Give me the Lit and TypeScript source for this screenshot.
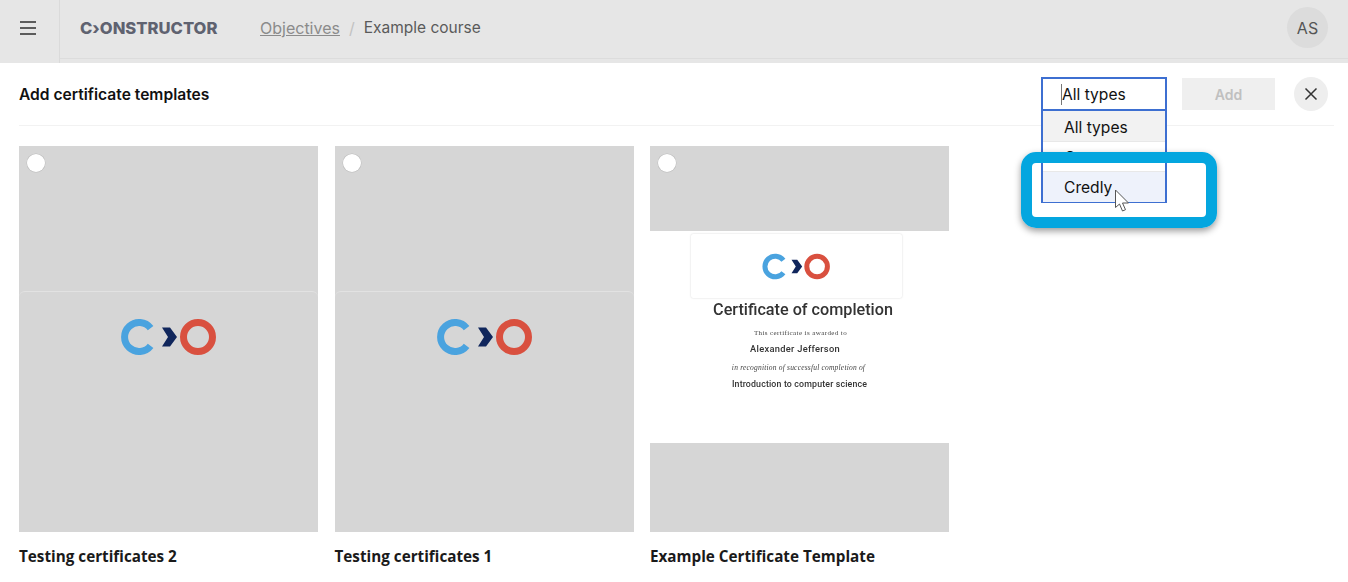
import { LitElement, html, css } from "lit";
import { customElement } from "lit/decorators.js";

const logo = html`<svg class="co-logo" viewBox="0 0 96 38" width="96" height="38">
  <path d="M29.6 10.2A14.5 14.5 0 1 0 29.6 27.8" fill="none" stroke="#4aa3df" stroke-width="7" />
  <path d="M41 9.5H49L56 19L49 28.5H41L47 19Z" fill="#10265c" />
  <circle cx="77" cy="19" r="14.5" fill="none" stroke="#d9503f" stroke-width="7" />
</svg>`;

@customElement("app-root")
export class AppRoot extends LitElement {
  static styles = css`
    :host {
      display: block;
      height: 582px;
      overflow: hidden;
      background: #fff;
      font-family: Inter, "Liberation Sans", sans-serif;
      color: #111;
    }

    .topbar {
      display: flex;
      align-items: flex-start;
      height: 63px;
      background: #e6e6e6;
    }

    .menu-btn {
      display: flex;
      align-items: center;
      justify-content: center;
      box-sizing: border-box;
      width: 60px;
      height: 63px;
      padding: 0 4px 7px 0;
      border-right: 1px solid #dadada;
    }

    .topbar-inner {
      flex: 1;
      display: flex;
      align-items: center;
      box-sizing: border-box;
      height: 59px;
      padding: 0 20px 3px 0;
      border-bottom: 1px solid #dcdcdc;
    }

    .brand {
      margin-left: 20px;
      width: 180px;
      font-size: 16.6px;
      font-weight: 800;
      color: #5f6270;
    }

    .crumbs {
      display: flex;
      align-items: center;
      font-size: 16px;
      color: #5a5a5a;
    }

    .crumbs a {
      color: #8b8b8b;
      text-decoration: underline;
    }

    .crumbs .sep {
      color: #c2c2c2;
      margin: 0 9px;
    }

    .crumbs .current {
      font-size: 15.5px;
    }

    .avatar {
      margin-left: auto;
      width: 41px;
      height: 41px;
      border-radius: 50%;
      background: #dcdcdc;
      color: #555;
      font-size: 16px;
      display: flex;
      align-items: center;
      justify-content: center;
    }

    .toolbar {
      display: flex;
      align-items: center;
      height: 62px;
      margin-left: 19px;
      margin-right: 14px;
      padding-right: 6px;
      border-bottom: 1px solid #f2f2f2;
    }

    .toolbar h1 {
      margin: 0;
      font-size: 15.6px;
      font-weight: 600;
      margin-right: auto;
    }

    .select {
      position: relative;
      width: 126px;
      height: 34px;
      margin-right: 15px;
    }

    .select-value {
      box-sizing: border-box;
      height: 34px;
      border: 2px solid #3d6fd1;
      padding-left: 19px;
      font-size: 15.6px;
      line-height: 32px;
      background: #fff;
      position: relative;
    }

    .caret {
      position: absolute;
      left: 18px;
      top: 5px;
      width: 1px;
      height: 21px;
      background: #777;
    }

    .options {
      position: absolute;
      left: 0;
      right: 0;
      top: 33px;
      box-sizing: border-box;
      height: 93px;
      border: 2px solid #3d6fd1;
      border-top-width: 1px;
      background: #fff;
      font-size: 15.6px;
    }

    .option {
      box-sizing: border-box;
      height: 30px;
      padding-left: 21px;
      line-height: 32px;
      border-bottom: 1px solid #e8e8e8;
    }

    .option.first {
      height: 31px;
      line-height: 33px;
      background: #f2f2f2;
    }

    .option.hover {
      height: 30px;
      border-bottom: 0;
      background: #eef2fb;
    }

    .highlight {
      position: absolute;
      left: -20px;
      top: 75px;
      width: 196px;
      height: 76px;
      box-sizing: border-box;
      border: 11px solid #04a6df;
      border-radius: 15px;
      box-shadow: 0 3px 7px rgba(0, 0, 0, 0.4);
    }

    .pointer {
      position: absolute;
      left: 73px;
      top: 112px;
    }

    .add-btn {
      width: 93px;
      height: 32px;
      margin-right: 19px;
      background: #efefef;
      color: #c0c0c0;
      font-size: 14px;
      font-weight: 600;
      display: flex;
      align-items: center;
      justify-content: center;
    }

    .close-btn {
      width: 34px;
      height: 34px;
      border-radius: 50%;
      background: #eeeeee;
      display: flex;
      align-items: center;
      justify-content: center;
    }

    .cards {
      display: grid;
      grid-template-columns: repeat(3, 299px);
      column-gap: 16.5px;
      padding: 20px 0 0 19px;
    }

    .thumb {
      position: relative;
      box-sizing: border-box;
      height: 386px;
      background: #d6d6d6;
    }

    .radio {
      position: absolute;
      left: 8px;
      top: 8px;
      width: 18px;
      height: 18px;
      border-radius: 50%;
      background: #fff;
      box-shadow: 0 0 0 0.5px #bbb;
    }

    .logo-panel {
      position: absolute;
      left: 0;
      right: 0;
      top: 145px;
      height: 90px;
      padding-left: 1px;
      box-sizing: border-box;
      border-top: 1px solid #e2e2e2;
      border-radius: 6px 6px 0 0;
      display: flex;
      align-items: center;
      justify-content: center;
    }

    .cert {
      position: absolute;
      left: 0;
      right: 0;
      top: 85px;
      height: 212px;
      background: #fff;
      display: flex;
      flex-direction: column;
      align-items: center;
      color: #333;
      filter: blur(0.5px);
      white-space: nowrap;
    }

    .cert-logo {
      box-sizing: border-box;
      width: 211px;
      height: 64px;
      margin-top: 3px;
      margin-right: 7px;
      border-radius: 2px;
      box-shadow: 0 0 2px rgba(0, 0, 0, 0.18);
      display: flex;
      align-items: center;
      justify-content: center;
    }

    .cert-logo .co-logo {
      width: 69px;
      height: 27px;
    }

    .cert-title {
      font-family: Roboto, sans-serif;
      font-size: 16.2px;
      font-weight: 500;
      line-height: 20px;
      margin-top: 2px;
      margin-left: 7px;
    }

    .cert-small {
      font-family: "Liberation Serif", serif;
      font-size: 7px;
      letter-spacing: 0.4px;
      line-height: 8px;
      margin-top: 9px;
      margin-left: 2px;
      color: #444;
    }

    .cert-name {
      font-family: Roboto, sans-serif;
      font-size: 9.3px;
      font-weight: 500;
      line-height: 12px;
      margin-top: 6px;
      margin-right: 9px;
      letter-spacing: 0.3px;
    }

    .cert-small.italic {
      font-style: italic;
      font-size: 7.5px;
      letter-spacing: 0.2px;
      margin-top: 9px;
      margin-left: 0;
      margin-right: 2px;
    }

    .cert-course {
      font-family: Roboto, sans-serif;
      font-size: 8.8px;
      font-weight: 500;
      line-height: 12px;
      margin-top: 6px;
      letter-spacing: 0.15px;
    }

    .card-title {
      margin-top: 14px;
      font-family: "Open Sans", sans-serif;
      font-size: 15.25px;
      font-weight: 700;
      line-height: 20px;
      color: #1a1a1a;
    }
  `;

  render() {
    return html`
      <header class="topbar">
        <div class="menu-btn">
          <svg width="18" height="16" viewBox="0 0 18 16">
            <path d="M1 2H17M1 8H17M1 14H17" stroke="#5c5c5c" stroke-width="2" fill="none" />
          </svg>
        </div>
        <div class="topbar-inner">
          <div class="brand">C›ONSTRUCTOR</div>
          <nav class="crumbs">
            <a>Objectives</a><span class="sep">/</span><span class="current">Example course</span>
          </nav>
          <div class="avatar">AS</div>
        </div>
      </header>

      <div class="toolbar">
        <h1>Add certificate templates</h1>
        <div class="select">
          <div class="select-value"><span class="caret"></span>All types</div>
          <div class="options">
            <div class="option first">All types</div>
            <div class="option">Custom</div>
            <div class="option hover">Credly</div>
          </div>
          <div class="highlight"></div>
          <svg class="pointer" width="17" height="24" viewBox="0 0 17 24">
            <path
              d="M1.5 1V18.5L5.5 15L8.5 22L11.5 20.7L8.5 14H14.5Z"
              fill="#fff"
              stroke="#555"
              stroke-width="1"
            />
          </svg>
        </div>
        <div class="add-btn">Add</div>
        <div class="close-btn">
          <svg width="14" height="14" viewBox="0 0 14 14">
            <path d="M1.5 1.5L12.5 12.5M12.5 1.5L1.5 12.5" stroke="#333" stroke-width="1.5" fill="none" />
          </svg>
        </div>
      </div>

      <section class="cards">
        <div class="card">
          <div class="thumb">
            <div class="logo-panel">${logo}</div>
            <span class="radio"></span>
          </div>
          <div class="card-title">Testing certificates 2</div>
        </div>
        <div class="card">
          <div class="thumb">
            <div class="logo-panel">${logo}</div>
            <span class="radio"></span>
          </div>
          <div class="card-title">Testing certificates 1</div>
        </div>
        <div class="card">
          <div class="thumb">
            <div class="cert">
              <div class="cert-logo">${logo}</div>
              <div class="cert-title">Certificate of completion</div>
              <div class="cert-small">This certificate is awarded to</div>
              <div class="cert-name">Alexander Jefferson</div>
              <div class="cert-small italic">in recognition of successful completion of</div>
              <div class="cert-course">Introduction to computer science</div>
            </div>
            <span class="radio"></span>
          </div>
          <div class="card-title">Example Certificate Template</div>
        </div>
      </section>
    `;
  }
}

declare global {
  interface HTMLElementTagNameMap {
    "app-root": AppRoot;
  }
}
